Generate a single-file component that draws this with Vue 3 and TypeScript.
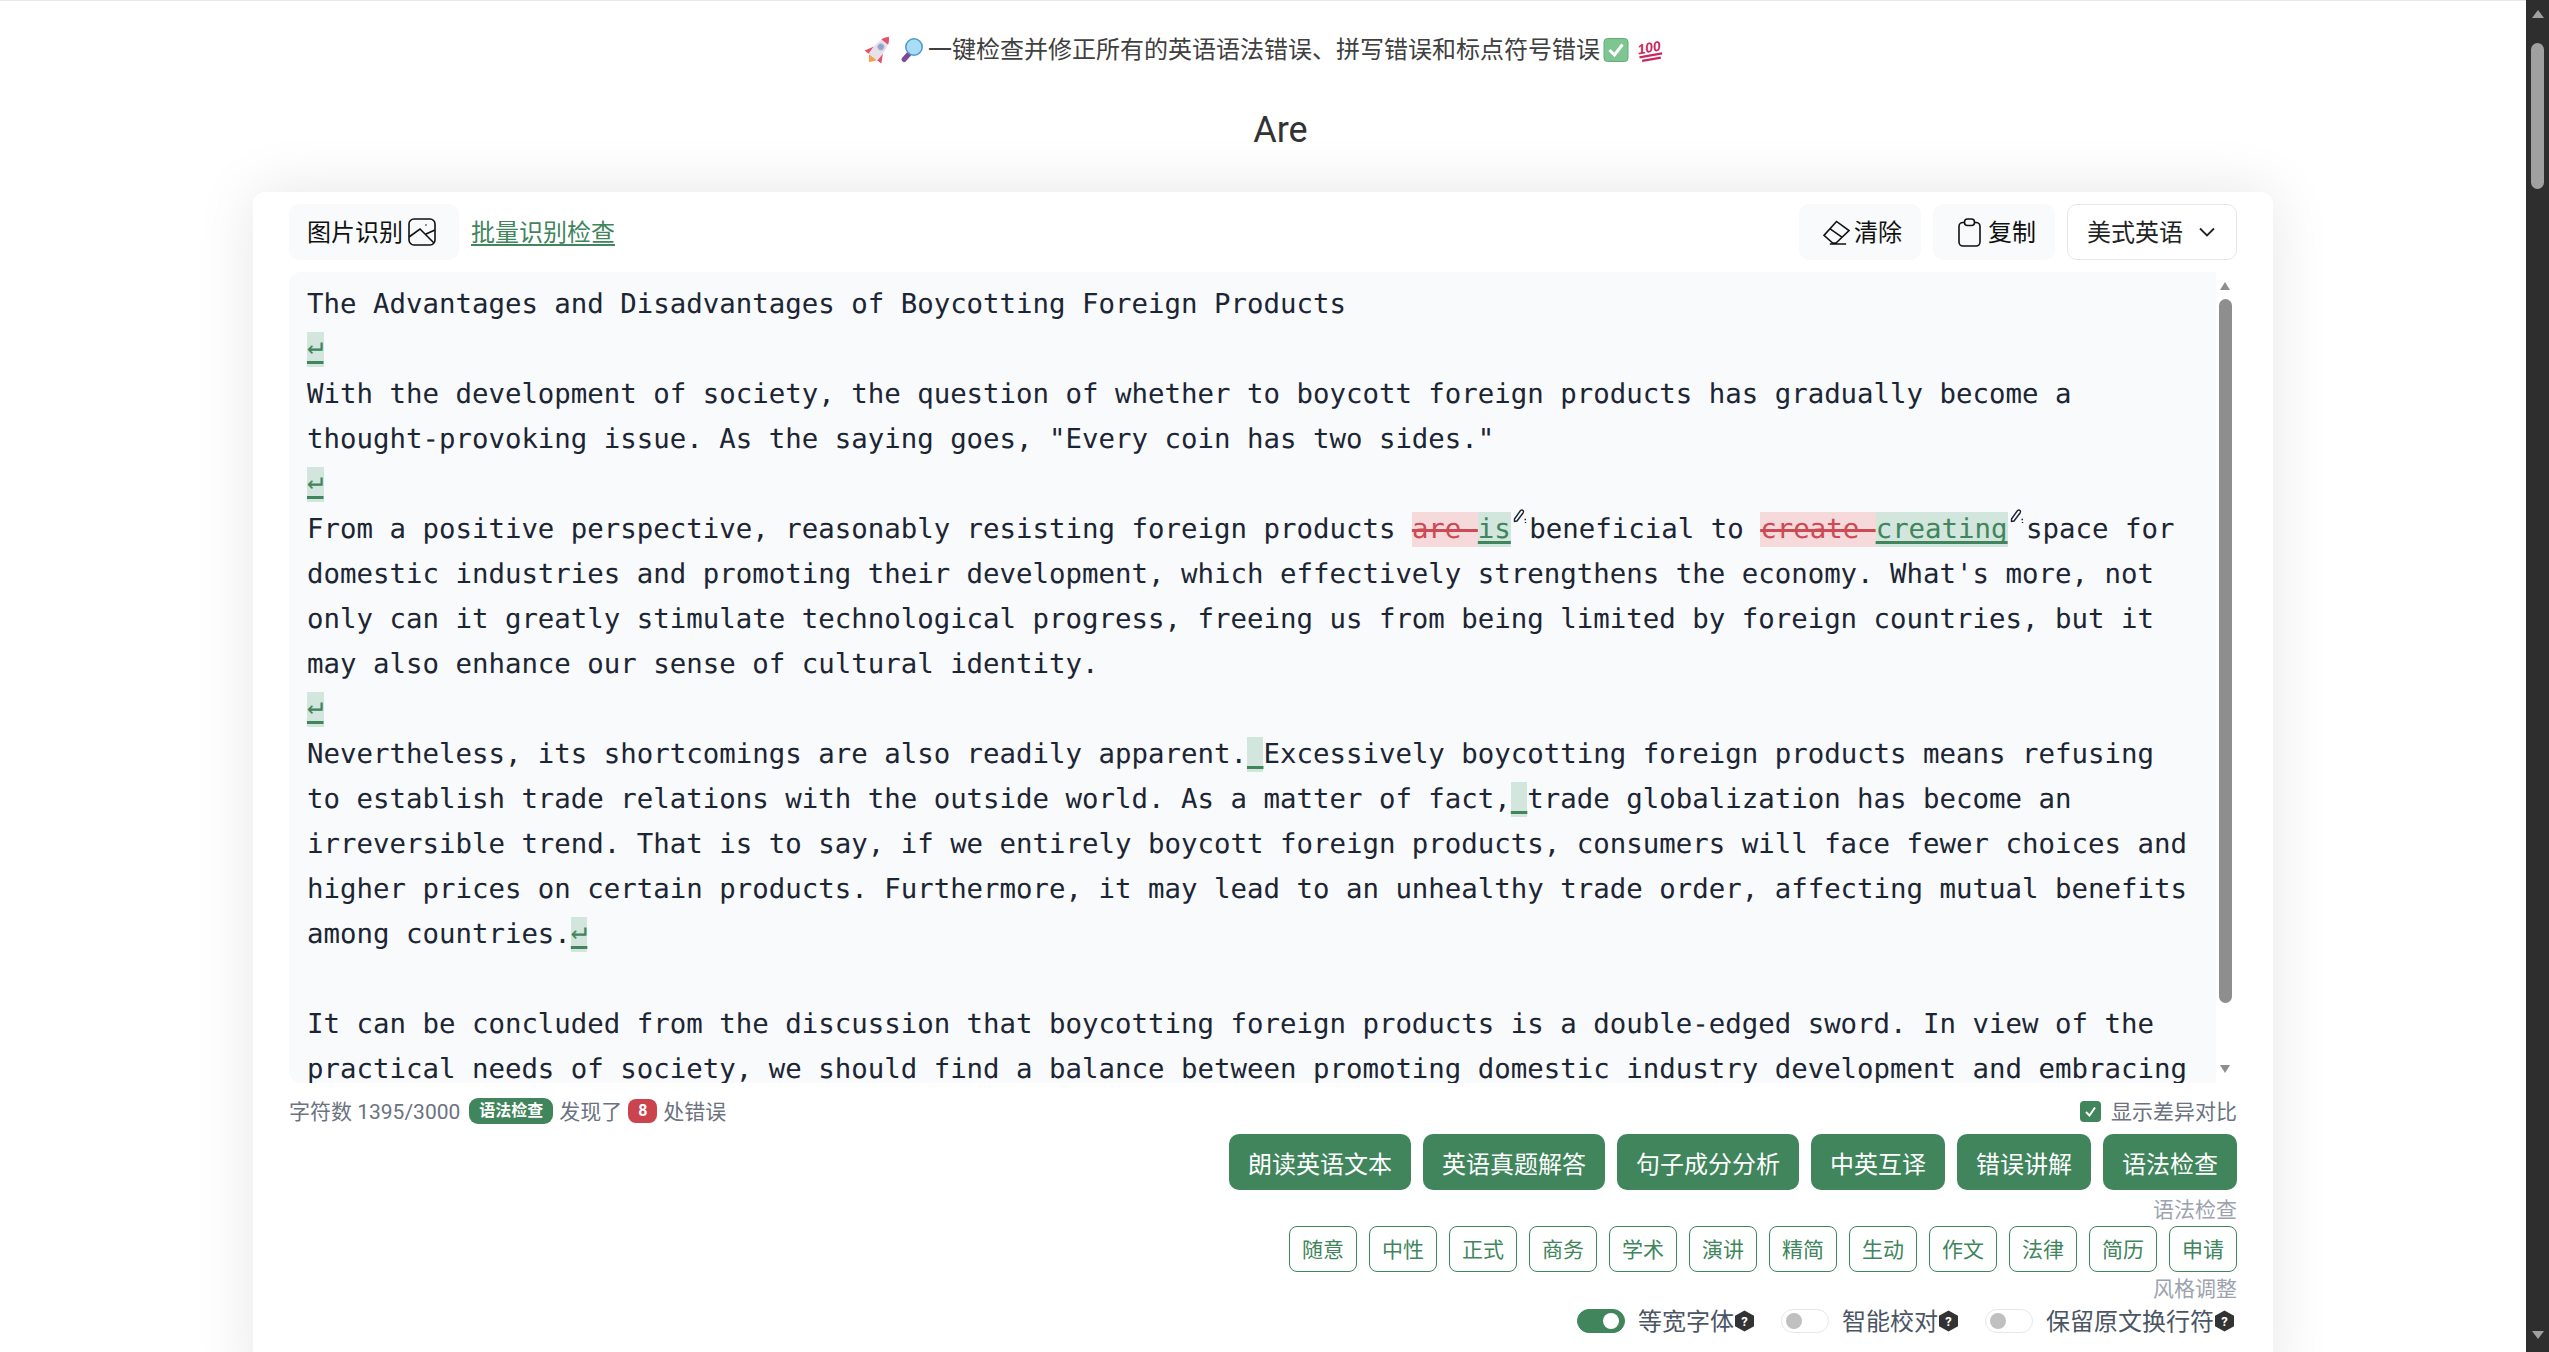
<script setup lang="ts">
interface Seg {
  text: string
  kind?: 'del' | 'ins'
  edit?: boolean
}

const p = (text: string): Seg => ({ text })
const ins = (text: string, edit = false): Seg => ({ text, kind: 'ins', edit })
const del = (text: string): Seg => ({ text, kind: 'del' })

const lines: Seg[][] = [
  [p('The Advantages and Disadvantages of Boycotting Foreign Products')],
  [ins('↵')],
  [p('With the development of society, the question of whether to boycott foreign products has gradually become a')],
  [p('thought-provoking issue. As the saying goes, "Every coin has two sides."')],
  [ins('↵')],
  [
    p('From a positive perspective, reasonably resisting foreign products '),
    del('are '),
    ins('is', true),
    p('beneficial to '),
    del('create '),
    ins('creating', true),
    p('space for'),
  ],
  [p("domestic industries and promoting their development, which effectively strengthens the economy. What's more, not")],
  [p('only can it greatly stimulate technological progress, freeing us from being limited by foreign countries, but it')],
  [p('may also enhance our sense of cultural identity.')],
  [ins('↵')],
  [p('Nevertheless, its shortcomings are also readily apparent.'), ins(' '), p('Excessively boycotting foreign products means refusing')],
  [p('to establish trade relations with the outside world. As a matter of fact,'), ins(' '), p('trade globalization has become an')],
  [p('irreversible trend. That is to say, if we entirely boycott foreign products, consumers will face fewer choices and')],
  [p('higher prices on certain products. Furthermore, it may lead to an unhealthy trade order, affecting mutual benefits')],
  [p('among countries.'), ins('↵')],
  [],
  [p('It can be concluded from the discussion that boycotting foreign products is a double-edged sword. In view of the')],
  [p('practical needs of society, we should find a balance between promoting domestic industry development and embracing')],
]

const actions = ['朗读英语文本', '英语真题解答', '句子成分分析', '中英互译', '错误讲解', '语法检查']
const styles = ['随意', '中性', '正式', '商务', '学术', '演讲', '精简', '生动', '作文', '法律', '简历', '申请']
const toggles = [
  { label: '等宽字体', on: true },
  { label: '智能校对', on: false },
  { label: '保留原文换行符', on: false },
]
</script>

<template>
  <div class="window">
    <main class="page">
      <p class="subtitle">
        <svg class="emoji rocket" viewBox="0 0 27 24" aria-hidden="true">
          <g transform="rotate(38 13.5 12) translate(13.5 12) scale(1.12) translate(-13.5 -12)">
            <path d="M9 20 L13.5 26 L18 20 Z" fill="#f4a04c" />
            <path d="M8.5 12 L4 20 L9 20 Z" fill="#e4506a" />
            <path d="M18.5 12 L23 20 L18 20 Z" fill="#e4506a" />
            <path d="M13.5 -3 C9 2 8 8 8.5 20 L18.5 20 C19 8 18 2 13.5 -3 Z" fill="#e6e1e9" />
            <path d="M13.5 -3 C11.5 -1 10.4 1 9.6 3 L17.4 3 C16.6 1 15.5 -1 13.5 -3 Z" fill="#e4506a" />
            <circle cx="13.5" cy="8.5" r="2.6" fill="#7ea8dc" stroke="#b9a9c9" />
          </g>
        </svg>
        <svg class="emoji lens" viewBox="0 0 24 24" aria-hidden="true">
          <path d="M9 16 L4 21.5" stroke="#7a4a96" stroke-width="5" stroke-linecap="round" />
          <circle cx="14" cy="9" r="8.2" fill="#a9dcf5" stroke="#4e9ccb" stroke-width="1.6" />
        </svg>
        <span>一键检查并修正所有的英语语法错误、拼写错误和标点符号错误</span>
        <svg class="emoji check" viewBox="0 0 26 24" aria-hidden="true">
          <rect x="1" y="0.5" width="24" height="23" rx="3.5" fill="#7fc592" stroke="#62ad78" />
          <path d="M6.5 12 L11.5 17 L19.5 6.5" fill="none" stroke="#fff" stroke-width="3" />
        </svg>
        <svg class="emoji hundred" viewBox="0 0 23 24" aria-hidden="true">
          <g transform="rotate(-10 11 10)">
            <text x="-0.5" y="14.5" class="hundred-text">100</text>
            <path d="M0 17.5 H23 M2 21.5 H21" stroke="#c8285c" stroke-width="2.2" />
          </g>
        </svg>
      </p>
      <h2 class="typed">Are</h2>

      <section class="card">
        <div class="toolbar">
          <div class="toolbar-side">
            <button class="soft-btn ocr-btn" type="button">
              <span class="btn-label">图片识别</span>
              <svg class="ocr-icon" viewBox="0 0 28 28" aria-hidden="true">
                <rect x="1" y="1" width="26" height="26" rx="5" />
                <path d="M1 19 L12 11 L26 25 M18 16 L27 12" />
                <circle cx="18" cy="7" r="0.8" class="dot" />
              </svg>
            </button>
            <a class="batch-link">批量识别检查</a>
          </div>
          <div class="toolbar-side">
            <button class="soft-btn clear-btn" type="button">
              <svg class="eraser" viewBox="0 0 28 26" aria-hidden="true">
                <path d="M1 16 L14 1.5 L27 11 L13.5 24 H10 Z M7 9 L20 18 M7 25 H24" />
              </svg>
              <span class="btn-label">清除</span>
            </button>
            <button class="soft-btn copy-btn" type="button">
              <svg class="clip" viewBox="0 0 23 29" aria-hidden="true">
                <rect x="1" y="4.5" width="21" height="23.5" rx="4" />
                <rect x="6.5" y="1" width="10" height="6.5" rx="3" class="clip-top" />
              </svg>
              <span class="btn-label">复制</span>
            </button>
            <div class="select">
              <span class="btn-label">美式英语</span>
              <svg class="chevron" viewBox="0 0 16 10" aria-hidden="true">
                <path d="M1 1.5 L8 8.5 L15 1.5" />
              </svg>
            </div>
          </div>
        </div>

        <div class="editor">
          <div class="editor-text">
            <div v-for="(line, i) in lines" :key="i" class="line">
              <template v-for="(seg, j) in line" :key="j">
                <span :class="seg.kind"><span :class="{ ret: seg.text === '↵' }">{{ seg.text }}</span></span>
                <svg v-if="seg.edit" class="pencil" viewBox="0 0 14 15" aria-hidden="true">
                  <path d="M1.5 10 L7.5 1.5 Q9 0.5 10 1.5 Q11 2.5 10 4 L4 12 L1.5 12.5 Z" />
                  <path d="M11.5 10.5 h1.5 M12.5 13 v1" />
                </svg>
              </template>
            </div>
          </div>
          <div class="editor-scroll" aria-hidden="true">
            <i class="arrow up"></i>
            <i class="thumb"></i>
            <i class="arrow down"></i>
          </div>
        </div>

        <div class="meta">
          <div class="meta-side">
            <span class="meta-text">字符数 1395/3000</span>
            <span class="tag">语法检查</span>
            <span class="meta-text">发现了</span>
            <span class="count">8</span>
            <span class="meta-text">处错误</span>
          </div>
          <label class="diff">
            <svg class="checkbox" viewBox="0 0 21 21" aria-hidden="true">
              <rect width="21" height="21" rx="4" />
              <path d="M6 11 L9.5 14.5 L15 6.5" />
            </svg>
            <span class="meta-text">显示差异对比</span>
          </label>
        </div>

        <div class="actions">
          <button v-for="a in actions" :key="a" class="action" type="button">{{ a }}</button>
        </div>
        <div class="caption first">语法检查</div>
        <div class="chips">
          <button v-for="s in styles" :key="s" class="chip" type="button">{{ s }}</button>
        </div>
        <div class="caption second">风格调整</div>
        <div class="toggles">
          <div v-for="t in toggles" :key="t.label" class="toggle-item">
            <span class="toggle" :class="{ on: t.on }"><i class="knob"></i></span>
            <span class="toggle-label">{{ t.label }}</span>
            <svg class="help" viewBox="0 0 21 22" aria-hidden="true">
              <path d="M10.5 0.5 L20 5.8 V16.2 L10.5 21.5 L1 16.2 V5.8 Z" />
              <text x="10.5" y="15.5" class="help-mark">?</text>
            </svg>
          </div>
        </div>
      </section>
    </main>

    <aside class="page-scroll" aria-hidden="true">
      <i class="page-arrow up"></i>
      <i class="page-thumb"></i>
      <i class="page-arrow down"></i>
    </aside>
  </div>
</template>

<style scoped>
.window {
  display: flex;
  height: 1352px;
  overflow: hidden;
  background: #fff;
  font-family: Roboto, "Noto Sans CJK SC", sans-serif;
  color: #1f2937;
}

.page {
  flex: 1;
  min-width: 0;
  border-top: 1px solid #e9e9e9;
  padding-top: 31px;
}

.subtitle {
  display: flex;
  align-items: center;
  justify-content: center;
  height: 36px;
  margin: 0;
  font-size: 24px;
  line-height: 36px;
  color: #404040;
}

.emoji {
  flex: none;
  height: 24px;
  overflow: visible;
}

.rocket {
  width: 27px;
  margin-right: 8px;
}

.lens {
  width: 24px;
  margin-right: 4px;
}

.check {
  width: 26px;
  margin-left: 3px;
}

.hundred {
  width: 23px;
  margin-left: 9px;
}

.hundred-text {
  font: italic 700 14px "Liberation Sans", sans-serif;
  fill: #c8285c;
}

.typed {
  height: 50px;
  margin: 37px 0 0;
  padding-left: 35px;
  font-size: 36px;
  font-weight: 400;
  line-height: 50px;
  text-align: center;
  color: #333;
}

.card {
  width: 2020px;
  height: 1200px;
  margin: 37px auto 0;
  padding: 12px 36px 0;
  box-sizing: border-box;
  background: #fff;
  border-radius: 12px;
  box-shadow: 0 0 60px rgba(0, 0, 0, 0.1);
}

.toolbar {
  display: flex;
  justify-content: space-between;
  height: 56px;
}

.toolbar-side {
  display: flex;
  align-items: center;
  gap: 12px;
}

button {
  font: inherit;
  cursor: pointer;
}

.soft-btn {
  display: flex;
  align-items: center;
  height: 56px;
  border: 0;
  border-radius: 10px;
  background: #f8fafb;
  font-size: 24px;
  color: #111;
  white-space: nowrap;
}

.btn-label {
  margin-bottom: 3px;
}

.ocr-btn {
  gap: 5px;
  width: 170px;
  padding: 0 0 0 18px;
}

.ocr-icon {
  width: 28px;
  height: 28px;
  fill: none;
  stroke: #111;
  stroke-width: 1.6;
}

.dot {
  fill: #111;
  stroke: none;
}

.batch-link {
  margin-bottom: 3px;
  font-size: 24px;
  color: #40855c;
  text-decoration: underline;
  text-underline-offset: 3px;
}

.clear-btn {
  gap: 4px;
  width: 122px;
  padding: 0 0 0 24px;
}

.copy-btn {
  gap: 7px;
  width: 122px;
  padding: 0 0 0 25px;
}

.eraser {
  width: 27px;
  height: 25px;
  fill: none;
  stroke: #111;
  stroke-width: 1.6;
}

.clip {
  width: 23px;
  height: 29px;
  fill: none;
  stroke: #111;
  stroke-width: 1.6;
}

.clip-top {
  fill: #f8fafb;
}

.select {
  display: flex;
  align-items: center;
  gap: 16px;
  width: 170px;
  height: 56px;
  padding-left: 19px;
  box-sizing: border-box;
  border: 1px solid #e5e7eb;
  border-radius: 10px;
  font-size: 24px;
  color: #222;
}

.chevron {
  width: 16px;
  height: 10px;
  fill: none;
  stroke: #222;
  stroke-width: 1.8;
}

.editor {
  display: flex;
  height: 811px;
  margin-top: 12px;
}

.editor-text {
  flex: 1;
  min-width: 0;
  padding: 10px 0 0 18px;
  overflow: hidden;
  background: #f8fafc;
  border-radius: 12px 0 0 12px;
  font-family: "DejaVu Sans Mono", monospace;
  font-size: 27.4px;
  line-height: 45px;
  color: #1c2533;
  text-rendering: geometricPrecision;
}

.line {
  height: 45px;
  white-space: pre;
}

.del,
.ins {
  padding: 2px 0;
  text-decoration-thickness: 3px;
  text-decoration-skip-ink: none;
}

.del {
  background: #f6d9db;
  color: #cc4a53;
  text-decoration-line: line-through;
  text-decoration-color: #cc4a53;
}

.ins {
  background: #d3e6dd;
  color: #40855c;
  text-decoration-line: underline;
  text-decoration-color: #40855c;
  text-underline-offset: 3px;
}

.ret {
  position: relative;
  top: -4px;
}

.pencil {
  display: inline-block;
  width: 14px;
  height: 15px;
  margin: 0 2.5px 0 2px;
  vertical-align: 14px;
  fill: none;
  stroke: #1c2533;
  stroke-width: 1.4;
}

.editor-scroll {
  display: flex;
  flex-direction: column;
  flex: none;
  width: 21px;
  padding: 10px 0 0 3px;
  box-sizing: border-box;
}

.arrow {
  display: block;
  width: 0;
  height: 0;
  margin-left: 1px;
  border-left: 5.5px solid transparent;
  border-right: 5.5px solid transparent;
}

.arrow.up {
  border-bottom: 8px solid #8e8e8e;
}

.arrow.down {
  margin-top: 62px;
  border-top: 8px solid #8e8e8e;
}

.thumb {
  display: block;
  width: 13px;
  height: 704px;
  margin-top: 9px;
  border-radius: 7px;
  background: #8e8e8e;
}

.meta {
  display: flex;
  justify-content: space-between;
  align-items: center;
  height: 26px;
  margin-top: 15px;
  font-size: 21px;
  color: #6b7280;
}

.meta-text {
  margin-bottom: 2px;
}

.meta-side {
  display: flex;
  align-items: center;
  gap: 6px;
}

.tag {
  margin-left: 3px;
  padding: 0 10px;
  height: 26px;
  border-radius: 9px;
  background: #40855c;
  color: #fff;
  font-size: 16px;
  font-weight: 700;
  line-height: 26px;
}

.count {
  width: 29px;
  height: 24px;
  border-radius: 8px;
  background: #cb434d;
  color: #fff;
  font-size: 16px;
  font-weight: 700;
  line-height: 24px;
  text-align: center;
}

.diff {
  display: flex;
  align-items: center;
  gap: 10px;
}

.checkbox {
  width: 21px;
  height: 21px;
  fill: #40855c;
}

.checkbox path {
  fill: none;
  stroke: #fff;
  stroke-width: 2;
}

.actions {
  display: flex;
  justify-content: flex-end;
  gap: 12px;
  margin-top: 10px;
}

.action {
  height: 56px;
  padding: 0 19px;
  border: 0;
  border-radius: 10px;
  background: #40855c;
  color: #fff;
  font-size: 24px;
}

.caption {
  height: 28px;
  font-size: 21px;
  line-height: 28px;
  text-align: right;
  color: #9ca3af;
}

.caption.first {
  margin-top: 6px;
}

.caption.second {
  margin-top: 3px;
}

.chips {
  display: flex;
  justify-content: flex-end;
  gap: 12px;
  margin-top: 2px;
}

.chip {
  width: 68px;
  height: 46px;
  padding: 0 0 2px;
  background: #fff;
  border: 1px solid #40855c;
  border-radius: 8px;
  color: #40855c;
  font-size: 21px;
}

.toggles {
  display: flex;
  justify-content: flex-end;
  gap: 26px;
  margin-top: 6px;
  padding-right: 2px;
}

.toggle-item {
  display: flex;
  align-items: center;
  height: 24px;
}

.toggle {
  display: flex;
  align-items: center;
  width: 48px;
  height: 24px;
  padding-left: 4px;
  box-sizing: border-box;
  border: 1px solid #e5e7eb;
  border-radius: 12px;
  background: #fff;
}

.toggle.on {
  justify-content: flex-end;
  padding: 0 5px 0 0;
  border-color: #40855c;
  background: #40855c;
}

.knob {
  display: block;
  width: 16px;
  height: 16px;
  border-radius: 50%;
  background: #c0c0c0;
}

.on .knob {
  background: #fff;
}

.toggle-label {
  margin: 2px 0 0 13px;
  font-size: 24px;
  line-height: 24px;
  color: #4b5563;
  white-space: nowrap;
}

.help {
  width: 21px;
  height: 22px;
  fill: #333;
}

.help-mark {
  fill: #fff;
  font: 700 13px Roboto, sans-serif;
  text-anchor: middle;
}

.page-scroll {
  display: flex;
  flex-direction: column;
  align-items: center;
  flex: none;
  width: 23px;
  padding: 10px 0 13px;
  box-sizing: border-box;
  background: #2e2e2e;
}

.page-arrow {
  display: block;
  width: 0;
  height: 0;
  border-left: 6px solid transparent;
  border-right: 6px solid transparent;
}

.page-arrow.up {
  border-bottom: 8px solid #a0a0a0;
}

.page-arrow.down {
  margin-top: auto;
  border-top: 8px solid #a0a0a0;
}

.page-thumb {
  display: block;
  width: 13px;
  height: 146px;
  margin-top: 25px;
  border-radius: 7px;
  background: #a0a0a0;
}
</style>

<style>
html,
body {
  margin: 0;
  overflow: hidden;
}
</style>
